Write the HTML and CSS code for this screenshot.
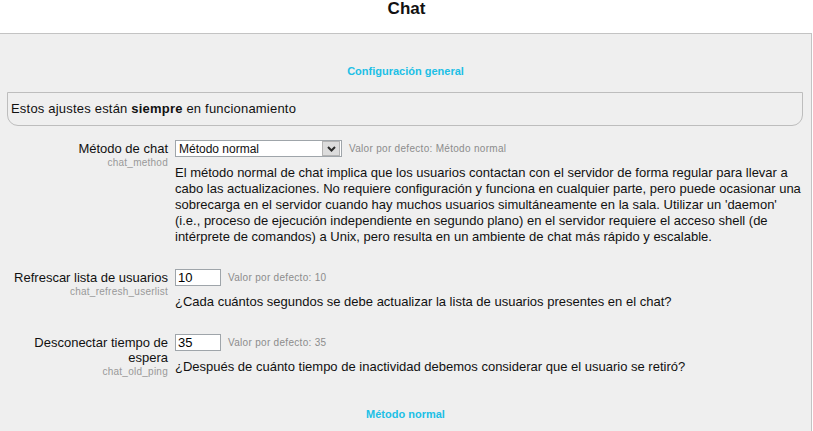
FILE: index.html
```html
<!DOCTYPE html>
<html lang="es">
<head>
  <meta charset="UTF-8">
  <title>Chat</title>
  <link rel="stylesheet" href="styles.css">
</head>
<body>
  <h2 class="page-title">Chat</h2>
  <div class="panel">
    <div class="legend">Configuración general</div>
    <div class="info">Estos ajustes están <strong>siempre</strong> en funcionamiento</div>

    <div class="setting">
      <div class="setting-label">
        <span class="label-text">Método de chat</span>
        <span class="setting-name">chat_method</span>
      </div>
      <div class="setting-body">
        <div class="setting-control">
          <div class="fake-select">
            <span class="fake-select-text">Método normal</span>
            <span class="fake-select-arrow">
              <svg width="9" height="6" viewBox="0 0 9 6"><path d="M1 1 L4.5 4.5 L8 1" fill="none" stroke="#2b2b2b" stroke-width="2"/></svg>
            </span>
          </div>
          <span class="default-value">Valor por defecto: Método normal</span>
        </div>
        <p class="description">El método normal de chat implica que los usuarios contactan con el servidor de forma regular para llevar a cabo las actualizaciones. No requiere configuración y funciona en cualquier parte, pero puede ocasionar una sobrecarga en el servidor cuando hay muchos usuarios simultáneamente en la sala. Utilizar un 'daemon' (i.e., proceso de ejecución independiente en segundo plano) en el servidor requiere el acceso shell (de intérprete de comandos) a Unix, pero resulta en un ambiente de chat más rápido y escalable.</p>
      </div>
    </div>

    <div class="setting">
      <div class="setting-label">
        <span class="label-text">Refrescar lista de usuarios</span>
        <span class="setting-name">chat_refresh_userlist</span>
      </div>
      <div class="setting-body">
        <div class="setting-control">
          <input type="text" class="small-input" value="10">
          <span class="default-value">Valor por defecto: 10</span>
        </div>
        <p class="description">¿Cada cuántos segundos se debe actualizar la lista de usuarios presentes en el chat?</p>
      </div>
    </div>

    <div class="setting">
      <div class="setting-label">
        <span class="label-text">Desconectar tiempo de espera</span>
        <span class="setting-name">chat_old_ping</span>
      </div>
      <div class="setting-body">
        <div class="setting-control">
          <input type="text" class="small-input" value="35">
          <span class="default-value">Valor por defecto: 35</span>
        </div>
        <p class="description">¿Después de cuánto tiempo de inactividad debemos considerar que el usuario se retiró?</p>
      </div>
    </div>

    <div class="legend legend-bottom">Método normal</div>
  </div>
</body>
</html>
```

FILE: styles.css
```css
/* Base */
body {
  margin: 0;
  font-family: 'Liberation Sans', Arial, sans-serif;
  color: #111;
  background: #fff;
}

.page-title {
  margin: 0;
  height: 33px;
  font-size: 17px;
  line-height: 17px;
  text-align: center;
}

.panel {
  background: #efefef;
  border-top: 1px solid #c3c3c3;
  border-right: 1px solid #c3c3c3;
  margin-right: 1px;
  height: 400px;
}

.legend {
  padding-top: 31px;
  height: 27px;
  text-align: center;
  color: #20bfe6;
  font-size: 11px;
  font-weight: bold;
}

.info {
  margin: 0 8px 0 7px;
  height: 32px;
  border: 1px solid #bdbdbd;
  border-radius: 0 0 11px 11px;
  padding-left: 3px;
  font-size: 13px;
  line-height: 32px;
  letter-spacing: 0.2px;
}

/* Filas de ajustes */
.setting {
  display: grid;
  grid-template-columns: 168px 1fr;
  column-gap: 7px;
  margin-top: 14px;
  padding-right: 6px;
}

.setting + .setting {
  margin-top: 24px;
}

.setting-label {
  display: flex;
  flex-direction: column;
  align-items: flex-end;
  text-align: right;
  padding-top: 1px;
}

.label-text {
  font-size: 13px;
  line-height: 15px;
}

.setting-name {
  font-size: 10px;
  line-height: 13px;
  color: #999;
  letter-spacing: 0.25px;
}

.setting-control {
  display: flex;
  align-items: center;
  gap: 7px;
  height: 17px;
}

.fake-select {
  display: flex;
  align-items: center;
  width: 165px;
  height: 15px;
  border: 1px solid #9fa5aa;
  background: #fff;
  font-size: 12px;
}

.fake-select-text {
  flex: 1;
  padding-left: 3px;
}

.fake-select-arrow {
  display: flex;
  align-items: center;
  justify-content: center;
  width: 16px;
  height: 13px;
  margin-right: 1px;
  background: #dcdcdc;
  border: 1px solid #b4b4b4;
}

.small-input {
  width: 40px;
  height: 15px;
  margin: 0;
  padding: 0 2px;
  border: 1px solid #9fa5aa;
  font-family: 'Liberation Sans', Arial, sans-serif;
  font-size: 13px;
}

.default-value {
  font-size: 10px;
  color: #8c8c8c;
  letter-spacing: 0.3px;
}

.description {
  margin: 8px 0 0;
  font-size: 13px;
  line-height: 16px;
}

.legend-bottom {
  padding-top: 30px;
}
```
